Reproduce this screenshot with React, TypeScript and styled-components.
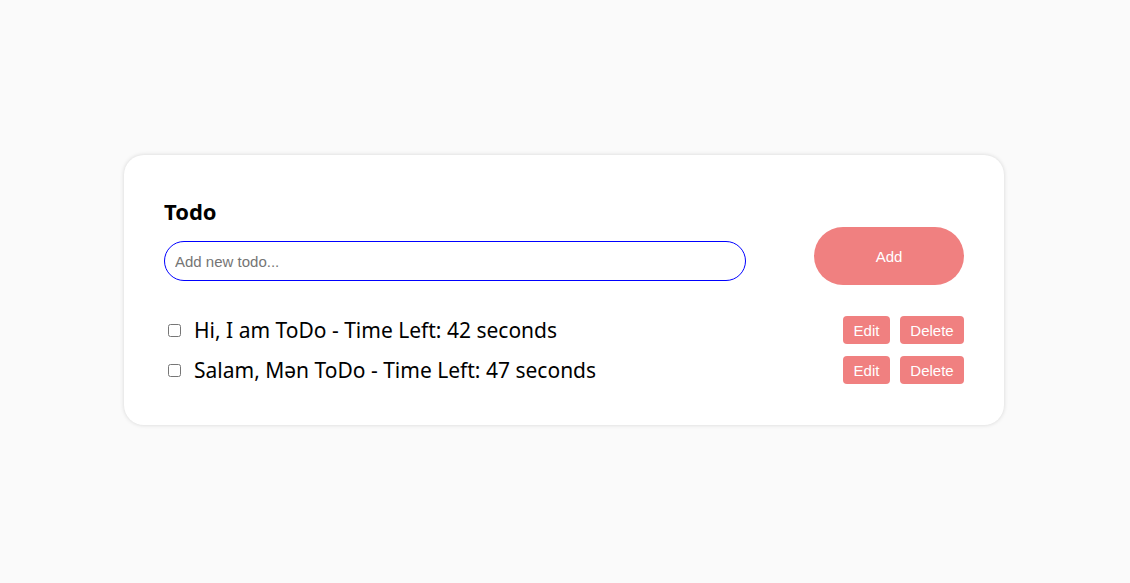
import React, { useState } from "react";
import styled, { createGlobalStyle } from "styled-components";

const Global = createGlobalStyle`
  html, body { margin: 0; padding: 0; }
  body {
    background: #fafafa;
    font-family: "Noto Sans", "Segoe UI", sans-serif;
    color: #000;
  }
`;

const Page = styled.div`
  min-height: 583px;
  display: flex;
  justify-content: center;
  align-items: flex-start;
  padding: 155px 2px 0 0;
  box-sizing: border-box;
`;

const Card = styled.div`
  width: 880px;
  box-sizing: border-box;
  background: #fff;
  border-radius: 20px;
  box-shadow: 0 0 4px rgba(0, 0, 0, 0.15);
  padding: 41px 40px 41px 40px;
`;

const Header = styled.div`
  display: flex;
  align-items: flex-end;
  justify-content: space-between;
`;

const LeftCol = styled.div`
  display: flex;
  flex-direction: column;
`;

const Title = styled.h2`
  margin: 0 0 15px 0;
  font-size: 22px;
  font-weight: 700;
  line-height: 30px;
`;

const Input = styled.input`
  width: 582px;
  height: 40px;
  box-sizing: border-box;
  border: 1px solid #0000ff;
  border-radius: 20px;
  padding: 0 10px;
  font-family: "Liberation Sans", Arial, sans-serif;
  font-size: 15px;
  outline: none;
  &::placeholder { color: #757575; }
`;

const AddButton = styled.button`
  width: 150px;
  height: 58px;
  margin-bottom: -4px;
  border: none;
  border-radius: 29px;
  background: #f08080;
  color: #fff;
  font-family: "Liberation Sans", Arial, sans-serif;
  font-size: 15px;
  cursor: pointer;
`;

const List = styled.ul`
  list-style: none;
  margin: 35px 0 0 0;
  padding: 0;
  display: flex;
  flex-direction: column;
  gap: 12px;
`;

const Item = styled.li`
  display: flex;
  align-items: center;
  height: 28px;
`;

const Check = styled.input`
  margin: 0 13px 0 4px;
  width: 13px;
  height: 13px;
`;

const ItemText = styled.span`
  flex: 1;
  font-size: 21px;
  color: #000;
`;

const Actions = styled.div`
  display: flex;
  gap: 10px;
`;

const SmallButton = styled.button<{ $w: number }>`
  width: ${(p) => p.$w}px;
  height: 28px;
  border: none;
  border-radius: 4px;
  background: #f08080;
  color: #fff;
  font-family: "Liberation Sans", Arial, sans-serif;
  font-size: 15px;
  padding: 0;
  cursor: pointer;
`;

const todos = [
  { id: 1, text: "Hi, I am ToDo - Time Left: 42 seconds" },
  { id: 2, text: "Salam, Mən ToDo - Time Left: 47 seconds" },
];

export default function App() {
  const [value, setValue] = useState("");
  return (
    <>
      <Global />
      <Page>
        <Card>
          <Header>
            <LeftCol>
              <Title>Todo</Title>
              <Input
                placeholder="Add new todo..."
                value={value}
                onChange={(e) => setValue(e.target.value)}
              />
            </LeftCol>
            <AddButton>Add</AddButton>
          </Header>
          <List>
            {todos.map((t) => (
              <Item key={t.id}>
                <Check type="checkbox" />
                <ItemText>{t.text}</ItemText>
                <Actions>
                  <SmallButton $w={47}>Edit</SmallButton>
                  <SmallButton $w={64}>Delete</SmallButton>
                </Actions>
              </Item>
            ))}
          </List>
        </Card>
      </Page>
    </>
  );
}
